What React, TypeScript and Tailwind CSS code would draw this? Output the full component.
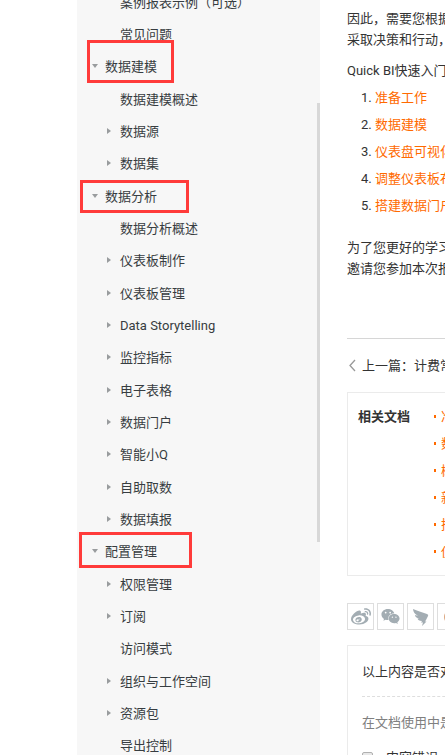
import React from "react";
import { FaWeibo, FaWeixin } from "react-icons/fa";

type NavItem = {
  label: string;
  kind: "section" | "folder" | "page";
  frame?: string;
};

const nav: NavItem[] = [
  { label: "案例报表示例（可选）", kind: "page" },
  { label: "常见问题", kind: "page" },
  { label: "数据建模", kind: "section", frame: "left-[10px] -top-[10px] w-[87px] h-[43px]" },
  { label: "数据建模概述", kind: "page" },
  { label: "数据源", kind: "folder" },
  { label: "数据集", kind: "folder" },
  { label: "数据分析", kind: "section", frame: "left-[3px] top-0 w-[109px] h-[33px]" },
  { label: "数据分析概述", kind: "page" },
  { label: "仪表板制作", kind: "folder" },
  { label: "仪表板管理", kind: "folder" },
  { label: "Data Storytelling", kind: "folder" },
  { label: "监控指标", kind: "folder" },
  { label: "电子表格", kind: "folder" },
  { label: "数据门户", kind: "folder" },
  { label: "智能小Q", kind: "folder" },
  { label: "自助取数", kind: "folder" },
  { label: "数据填报", kind: "folder" },
  { label: "配置管理", kind: "section", frame: "left-[2px] -top-[3px] w-[113px] h-[36px]" },
  { label: "权限管理", kind: "folder" },
  { label: "订阅", kind: "folder" },
  { label: "访问模式", kind: "page" },
  { label: "组织与工作空间", kind: "folder" },
  { label: "资源包", kind: "folder" },
  { label: "导出控制", kind: "page" },
];

const steps = ["准备工作", "数据建模", "仪表盘可视化", "调整仪表板布局", "搭建数据门户"];
const related = ["准备工作", "数据建模", "概述", "新建", "搭建", "仪表板"];

function Arrow({ kind }: { kind: NavItem["kind"] }) {
  if (kind === "page") return null;
  return (
    <svg viewBox="0 0 6 6" className="size-[6px] fill-[#999c9e]" aria-hidden="true">
      <path d={kind === "section" ? "M0 1h6L3 5z" : "M1 0v6l4-3z"} />
    </svg>
  );
}

function Sidebar() {
  return (
    <aside className="relative ml-[77px] w-[243px] shrink-0 overflow-hidden bg-[#f7f7f7]">
      <nav>
        <ul className="-mt-[14px]">
          {nav.map((item) => (
            <li key={item.label} className="relative nth-[3n]:pb-px">
              <a
                href="#"
                className={
                  item.kind === "section"
                    ? "flex h-8 items-center pl-[15px] text-[#373d41]"
                    : "flex h-8 items-center pl-[29px] text-[#373d41]"
                }
              >
                <span className={item.kind === "section" ? "w-[13px]" : "w-[14px]"}>
                  <Arrow kind={item.kind} />
                </span>
                {item.label}
              </a>
              {item.frame && (
                <span className={"pointer-events-none absolute border-3 border-[#ff3b3a] " + item.frame} />
              )}
            </li>
          ))}
        </ul>
      </nav>
      <div className="absolute top-[103px] right-0 h-[439px] w-[3px] bg-[#d8d8d8]" />
    </aside>
  );
}

function ShareButton({ label, children }: { label: string; children: React.ReactNode }) {
  return (
    <button
      type="button"
      aria-label={label}
      className="flex size-[27px] items-center justify-center border border-[#dedede] text-[#a3adb3]"
    >
      {children}
    </button>
  );
}

export default function App() {
  return (
    <div className="flex h-screen overflow-hidden bg-white font-['Roboto','Noto_Sans_CJK_SC',sans-serif] text-[13px] leading-[21px] text-[#333]">
      <Sidebar />
      <main className="ml-[27px] min-w-[600px] flex-1 pt-2 whitespace-nowrap">
        <p>
          因此，需要您根据
          <br />
          采取决策和行动，
        </p>
        <p className="mt-[10px]">Quick BI快速入门</p>
        <ol className="mt-[3px] list-decimal pl-7 leading-[27px]">
          {steps.map((step) => (
            <li key={step}>
              <a href="#" className="text-[#ff6a00]">
                {step}
              </a>
            </li>
          ))}
        </ol>
        <p className="mt-[18px]">
          为了您更好的学习
          <br />
          邀请您参加本次报
        </p>

        <div className="mt-[59px] border-t border-[#d6d6d6] pt-4">
          <a href="#" className="flex items-center">
            <svg viewBox="0 0 15 13" className="h-[13px] w-[15px] fill-none stroke-[#999]" aria-hidden="true">
              <path d="M8 1 3 6.500l5 5.500" strokeWidth="1.300" />
            </svg>
            上一篇：计费常见问题
          </a>
        </div>

        <section className="mt-4 flex border border-[#ebebeb] py-[10px] pl-[10px] leading-[27px]">
          <h2 className="w-[76px] font-bold">相关文档</h2>
          <ul className="text-[#ff6a00]">
            {related.map((doc) => (
              <li key={doc} className="flex items-center gap-[5px]">
                <span className="h-[3px] w-[2px] bg-[#ff6a00]" />
                <a href="#">{doc}</a>
              </li>
            ))}
          </ul>
        </section>

        <div className="mt-[27px] flex gap-[3px]">
          <ShareButton label="微博">
            <FaWeibo size={20} />
          </ShareButton>
          <ShareButton label="微信">
            <FaWeixin size={19} />
          </ShareButton>
          <ShareButton label="钉钉">
            <svg viewBox="0 0 18 18" className="size-[18px] fill-current" aria-hidden="true">
              <path d="M1 1c4 2 9 3 14 5 1 .5 1.500 1 1 2l-2 4-1 1.500h1.500L10 18l1-3.500H9L10 13c-3 0-4-1-4.500-2.500l2 .2C4.500 10 3 9 3 7l3 .7C3 6.200 1 4 1 1z" />
            </svg>
          </ShareButton>
          <ShareButton label="更多">
            <svg viewBox="0 0 16 16" className="size-4 fill-[#dba67f]" aria-hidden="true">
              <circle cx="8" cy="8" r="7" />
            </svg>
          </ShareButton>
        </div>

        <section className="mt-[15px] border border-[#ebebeb] px-[14px]">
          <h2 className="border-b border-dashed border-[#dedede] pt-[15px] pb-[14px]">以上内容是否对您有帮助？</h2>
          <p className="pt-[15px] text-[#808080]">在文档使用中是否遇到以下问题</p>
          <label className="mt-[14px] flex items-center gap-[13px]">
            <input
              type="checkbox"
              className="size-[11px] appearance-none rounded-xs border border-[#b0b0b0] bg-[#e8e8e8]"
            />
            内容错误
          </label>
        </section>
      </main>
    </div>
  );
}
